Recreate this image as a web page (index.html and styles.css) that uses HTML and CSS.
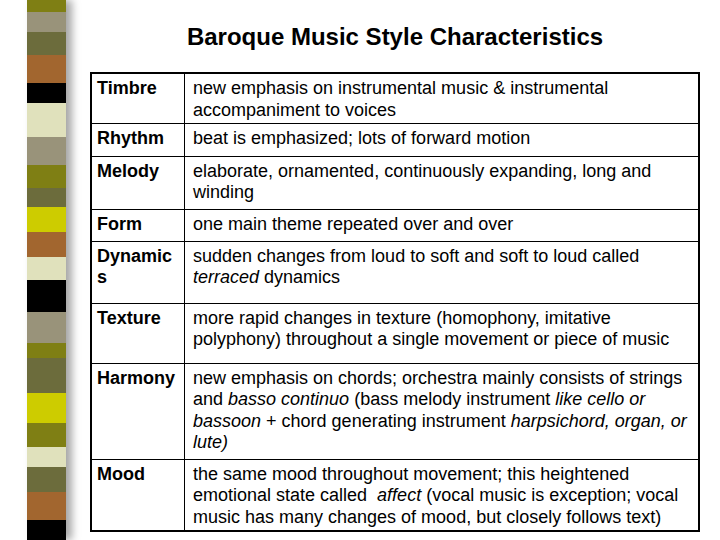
FILE: index.html
```html
<!DOCTYPE html>
<html>
<head>
<meta charset="utf-8">
<link rel="stylesheet" href="styles.css">
</head>
<body>
<div class="page">
  <div class="strip">
    <div class="blk olive" style="height:12px"></div>
    <div class="blk tan" style="height:20px"></div>
    <div class="blk dark" style="height:23px"></div>
    <div class="blk brown" style="height:28px"></div>
    <div class="blk black" style="height:20px"></div>
    <div class="blk cream" style="height:34px"></div>
    <div class="blk tan" style="height:28px"></div>
    <div class="blk olive" style="height:23px"></div>
    <div class="blk dark" style="height:19px"></div>
    <div class="blk yellow" style="height:25px"></div>
    <div class="blk brown" style="height:25px"></div>
    <div class="blk cream" style="height:23px"></div>
    <div class="blk black" style="height:32px"></div>
    <div class="blk tan" style="height:31px"></div>
    <div class="blk olive" style="height:15px"></div>
    <div class="blk dark" style="height:35px"></div>
    <div class="blk yellow" style="height:30px"></div>
    <div class="blk olive" style="height:24px"></div>
    <div class="blk cream" style="height:20px"></div>
    <div class="blk dark" style="height:25px"></div>
    <div class="blk brown" style="height:28px"></div>
    <div class="blk black" style="height:20px"></div>
  </div>
  <div class="main">
    <h1 class="title">Baroque Music Style Characteristics</h1>
    <table class="chart">
      <tr class="r1"><td class="lbl">Timbre</td><td class="val">new emphasis on instrumental music &amp; instrumental accompaniment to voices</td></tr>
      <tr class="r2"><td class="lbl">Rhythm</td><td class="val">beat is emphasized; lots of forward motion</td></tr>
      <tr class="r3"><td class="lbl">Melody</td><td class="val">elaborate, ornamented, continuously expanding, long and winding</td></tr>
      <tr class="r4"><td class="lbl">Form</td><td class="val">one main theme repeated over and over</td></tr>
      <tr class="r5"><td class="lbl">Dynamic<wbr>s</td><td class="val">sudden changes from loud to soft and soft to loud called <i>terraced</i> dynamics</td></tr>
      <tr class="r6"><td class="lbl">Texture</td><td class="val">more rapid changes in texture (homophony, imitative polyphony) throughout a single movement or piece of music</td></tr>
      <tr class="r7"><td class="lbl">Harmony</td><td class="val">new emphasis on chords; orchestra mainly consists of strings and <i>basso continuo</i> (bass melody instrument <i>like cello or bassoon</i> + chord generating instrument <i>harpsichord, organ, or lute)</i></td></tr>
      <tr class="r8"><td class="lbl">Mood</td><td class="val">the same mood throughout movement; this heightened emotional state called&nbsp; <i>affect</i> (vocal music is exception; vocal music has many changes of mood, but closely follows text)</td></tr>
    </table>
  </div>
</div>
</body>
</html>
```

FILE: styles.css
```css
html, body {
  margin: 0;
  padding: 0;
  background: #ffffff;
}

body {
  font-family: "Liberation Sans", Arial, sans-serif;
  color: #000000;
}

.page {
  width: 720px;
  height: 540px;
  display: flex;
  overflow: hidden;
}

.strip {
  width: 39px;
  margin-left: 27px;
  display: flex;
  flex-direction: column;
  box-shadow: 6px 0 8px rgba(0, 0, 0, 0.35);
  flex-shrink: 0;
}

.blk { flex-shrink: 0; }
.olive { background: #7f7f14; }
.tan { background: #99937a; }
.dark { background: #6c6c3c; }
.brown { background: #a2662f; }
.black { background: #000000; }
.cream { background: #e0e1bc; }
.yellow { background: #cdcc00; }

.main {
  margin-left: 24px;
  width: 610px;
  padding-top: 23px;
  display: flex;
  flex-direction: column;
}

.title {
  margin: 0 0 21px 0;
  font-size: 24px;
  line-height: 28px;
  font-weight: bold;
  text-align: center;
}

.chart {
  border-collapse: collapse;
  border: 2px solid #000;
  width: 610px;
  font-size: 18px;
  line-height: 21.5px;
}

.chart td {
  border: 1px solid #000;
  vertical-align: top;
  padding: 4px 8px 0 5px;
}

.chart .lbl {
  width: 80px;
  padding-right: 7px;
  font-weight: bold;
}

.chart .val {
  padding-left: 8px;
}

.r1 { height: 50px; }
.r2 { height: 33px; }
.r3 { height: 53px; }
.r4 { height: 32px; }
.r5 { height: 62px; }
.r6 { height: 60px; }
.r7 { height: 96px; }
.r8 { height: 72px; }
```
